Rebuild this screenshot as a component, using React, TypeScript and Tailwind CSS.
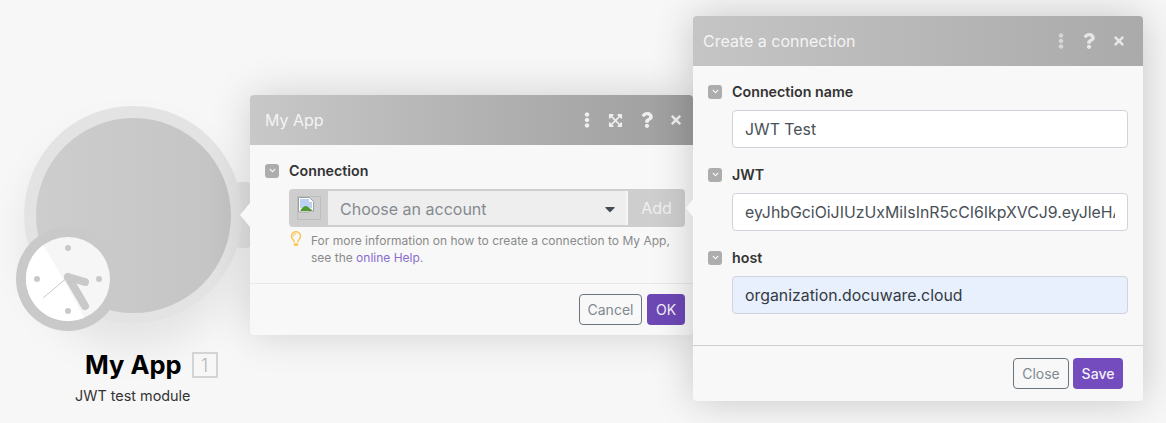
import type { ReactNode } from "react";
import { FaCaretDown, FaChevronDown, FaEllipsisV, FaExpandArrowsAlt, FaQuestion, FaRegLightbulb, FaTimes } from "react-icons/fa";

function ClockBadge() {
  return (
    <svg viewBox="0 0 104 104" className="absolute left-[16px] top-[227px] h-[104px] w-[104px]">
      <circle cx="52" cy="52" r="52" fill="#c9c9c9" />
      <circle cx="52" cy="52" r="42" fill="#f6f6f6" />
      <path d="M27 18 Q50 55 68 91 A42.2 42.2 0 0 1 27 18 Z" fill="#ffffff" />
      <circle cx="52" cy="21" r="3" fill="#c9c9c9" />
      <circle cx="52" cy="84" r="3" fill="#c9c9c9" />
      <circle cx="21" cy="52" r="3" fill="#c9c9c9" />
      <circle cx="83" cy="52" r="3" fill="#c9c9c9" />
      <path d="M52 50 L27 71" stroke="#c9c9c9" strokeWidth="1" />
      <path d="M52 50 L69 55 M52 50 L69 79" stroke="#c9c9c9" strokeWidth="8" strokeLinecap="round" />
    </svg>
  );
}

function LabelRow({ label }: { label: string }) {
  return (
    <div className="flex items-center gap-[10px]">
      <span className="flex h-[14px] w-[14px] items-center justify-center rounded-[3px] bg-[#adadad]">
        <FaChevronDown className="h-[7px] w-[7px] text-white" />
      </span>
      <span className="text-[14.25px] font-semibold leading-[17px] text-[#333333]">{label}</span>
    </div>
  );
}

function Field({ label, value, bg = "bg-white", text = "text-[#495057]" }: { label: string; value: string; bg?: string; text?: string }) {
  return (
    <div>
      <LabelRow label={label} />
      <input
        readOnly
        value={value}
        className={`ml-[24px] mt-[10px] block h-[38px] w-[396px] rounded-[4px] border border-[#ced4da] px-[12px] text-[15.85px] outline-none ${bg} ${text}`}
      />
    </div>
  );
}

function Header({ title, className, gap, children }: { title: string; className: string; gap: string; children: ReactNode }) {
  return (
    <div className={`flex h-[50px] items-center justify-between rounded-t-[4px] bg-gradient-to-r ${className}`}>
      <span className="text-[16px] text-[#f4f4f4]">{title}</span>
      <div className={`flex items-center ${gap}`}>{children}</div>
    </div>
  );
}

function BrokenImage() {
  return (
    <svg viewBox="0 0 16 16" className="h-[16px] w-[16px]">
      <path d="M0.5 0.5h11l4 4v10l-2-1-3 1.5h-10z" fill="#ffffff" stroke="#a0a0a0" strokeWidth="1" />
      <path d="M2 2h9v3h3v6H2z" fill="#bcd2f2" />
      <path d="M2 14 C5 9 8 8 10 10 L14 13 V14 Z" fill="#4f9b36" />
    </svg>
  );
}

export default function App() {
  return (
    <div className="relative h-[423px] w-[1166px] overflow-hidden bg-[#f7f7f7] font-['Inter',sans-serif]">
      {/* module on the canvas */}
      <div className="absolute left-[24px] top-[106px] h-[218px] w-[218px] rounded-full shadow-[0_24px_40px_rgba(0,0,0,0.08)]" />
      <div className="absolute left-[220px] top-[182px] h-[66px] w-[46px] rounded-[22px] bg-[#e0e0e0]" />
      <div className="absolute left-[24px] top-[106px] flex h-[218px] w-[218px] items-center justify-center rounded-full bg-[#e3e3e3]">
        <div className="h-[195px] w-[195px] rounded-full bg-gradient-to-r from-[#cdcdcd] to-[#c4c4c4]" />
      </div>
      <ClockBadge />
      <div className="absolute left-[85px] top-[350px] flex items-center gap-[10px]">
        <span className="text-[25.5px] font-bold leading-[30px] text-black">My App</span>
        <span className="flex h-[26px] w-[26px] items-center justify-center border-2 border-[#d4d4d4] text-[18px] font-light text-[#b5b5b5]">1</span>
      </div>
      <div className="absolute left-[75px] top-[387px] text-[14.4px] leading-[17px] text-[#333333]">JWT test module</div>

      {/* module settings dialog */}
      <div className="absolute left-[250px] top-[95px] w-[443px] rounded-[4px] bg-[#f8f8f8] shadow-[0_0_40px_rgba(0,0,0,0.16)]">
        <div className="absolute left-[-10px] top-[108px] h-0 w-0 border-y-[12px] border-r-[10px] border-y-transparent border-r-[#f8f8f8]" />
        <Header title="My App" className="from-[#c8c8c8] to-[#9e9e9e] pl-[15px] pr-[12px]" gap="gap-[18px]">
          <FaEllipsisV className="h-[16px] w-[6px] text-[#efefef]" />
          <FaExpandArrowsAlt className="h-[15px] w-[15px] text-[#efefef]" />
          <FaQuestion className="h-[16px] w-[12px] text-[#efefef]" />
          <FaTimes className="h-[14px] w-[10px] text-[#efefef]" />
        </Header>
        <div className="h-[138px] pl-[15px] pr-[8px] pt-[17px]">
          <LabelRow label="Connection" />
          <div className="ml-[24px] mt-[10px] flex h-[38px] w-[396px] items-center rounded-[4px] bg-[#cecece]">
            <div className="flex w-[39px] justify-center">
              <div className="h-[24px] w-[24px] border border-[#bdbdbd] pl-[0.5px]">
                <BrokenImage />
              </div>
            </div>
            <div className="flex h-[34px] w-[300px] items-center justify-between border-r-2 border-[#f6f6f6] bg-[#eeeeee] pl-[12px] pr-[11px] pt-[1px]">
              <span className="text-[16px] text-[#858a90]">Choose an account</span>
              <FaCaretDown className="h-[16px] w-[10px] text-[#444a52]" />
            </div>
            <span className="flex-1 text-center text-[16px] text-[#f0f0f0]">Add</span>
          </div>
          <div className="ml-[25px] mt-[5px] flex gap-[9px]">
            <FaRegLightbulb className="mt-[-1px] h-[15px] w-[12px] shrink-0 text-[#fbc653]" />
            <p className="text-[12px] leading-[17px] text-[#8a8a8a]">
              For more information on how to create a connection to My App,
              <br />
              see the <span className="text-[#8a6cd0]">online Help</span>.
            </p>
          </div>
        </div>
        <div className="flex h-[52px] items-start justify-end gap-[5px] border-t border-[#e8e8e8] pr-[8px] pt-[10px]">
          <button className="h-[31px] w-[63px] rounded-[4px] border border-[#6c757d] text-[14px] text-[#808890]">Cancel</button>
          <button className="h-[31px] w-[38px] rounded-[4px] bg-[#6d48b5] text-[14px] text-[#f4f0fa]">OK</button>
        </div>
      </div>

      {/* create a connection dialog */}
      <div className="absolute left-[693px] top-[16px] w-[450px] rounded-[4px] bg-[#f8f8f8] shadow-[0_0_40px_rgba(0,0,0,0.2)]">
        <div className="absolute left-[-7px] top-[183px] h-0 w-0 border-y-[9px] border-r-[7px] border-y-transparent border-r-[#f8f8f8]" />
        <Header title="Create a connection" className="from-[#c5c5c5] to-[#aaaaaa] pl-[10px] pr-[19px]" gap="gap-[19px]">
          <FaEllipsisV className="h-[16px] w-[6px] text-[#d6d6d6]" />
          <FaQuestion className="h-[16px] w-[12px] text-[#e6e6e6]" />
          <FaTimes className="h-[14px] w-[10px] text-[#e6e6e6]" />
        </Header>
        <div className="flex h-[279px] flex-col gap-[18px] pl-[15px] pt-[17px]">
          <Field label="Connection name" value="JWT Test" />
          <Field label="JWT" value="eyJhbGciOiJIUzUxMiIsInR5cCI6IkpXVCJ9.eyJleHAiOjE2MTc" />
          <Field label="host" value="organization.docuware.cloud" bg="bg-[#e8f0fe]" text="text-[#333a42]" />
        </div>
        <div className="flex h-[56px] items-start justify-end gap-[4px] border-t border-[#cfcfcf] pr-[20px] pt-[12px]">
          <button className="h-[31px] w-[56px] rounded-[4px] border border-[#6c757d] text-[14px] text-[#808890]">Close</button>
          <button className="h-[31px] w-[50px] rounded-[4px] bg-[#754cbd] text-[14px] font-medium text-[#f4f0fa]">Save</button>
        </div>
      </div>
    </div>
  );
}
